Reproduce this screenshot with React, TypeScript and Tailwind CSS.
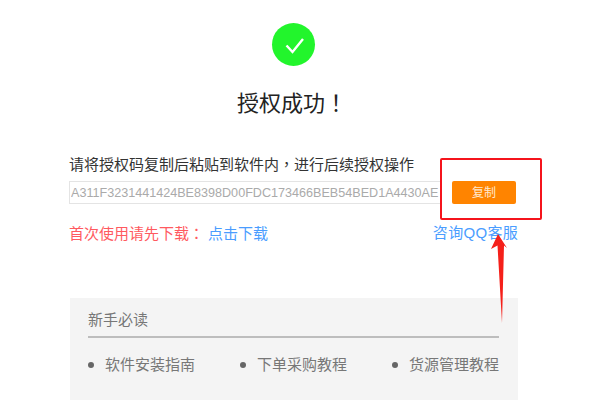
const guides = ["软件安装指南", "下单采购教程", "货源管理教程"];

export default function App() {
  return (
    <div className="relative w-[600px] h-[417px] overflow-hidden bg-white font-['Liberation_Sans','Noto_Sans_CJK_SC',sans-serif]">
      <div className="flex flex-col pl-[69px] pr-[82px] pt-[23px]">
        <div className="flex justify-center">
          <div className="flex items-center justify-center w-[43px] h-[43px] rounded-full bg-[#22f52c]">
            <svg width="24" height="24" viewBox="0 0 24 24" fill="none">
              <path d="M4.5 12.5 L10.5 19 L21 6" stroke="#fff" strokeWidth="2.4" />
            </svg>
          </div>
        </div>
        <h1 className="mt-[20px] mr-[3px] h-[30px] text-center text-[22px] leading-[30px] text-[#222]">
          授权成功<span className="font-['Noto_Sans_CJK_TC']">！</span>
        </h1>

        <p className="mt-[38px] h-[20px] text-[15px] leading-[20px] text-[#333]">
          请将授权码复制后粘贴到软件内<span className="font-['Noto_Sans_CJK_TC']">，</span>进行后续授权操作
        </p>
        <div className="mt-[7px] flex items-center">
          <input
            readOnly
            value="A311F3231441424BE8398D00FDC173466BEB54BED1A4430AE"
            className="w-[372px] h-[23px] border border-[#e4e4e4] px-[1px] text-[12.6px] text-[#aaa] outline-none"
          />
          <button className="ml-[11px] w-[64px] h-[23px] rounded-[2px] bg-[#ff8400] text-[12px] text-[#ffe9cf]">复制</button>
        </div>

        <div className="mt-[19px] h-[20px] flex justify-between text-[15px] leading-[20px]">
          <div>
            <span className="text-[#ff5a5f]">
              首次使用请先下载<span className="font-['Noto_Sans_CJK_TC']">：</span>
            </span>
            <a className="ml-[4px] text-[#4a9dff]">点击下载</a>
          </div>
          <a className="text-[#4a9dff] tracking-[0.3px]">咨询QQ客服</a>
        </div>

        <div className="mt-[55px] ml-[1px] h-[102px] bg-[#f4f4f4] pl-[18px] pr-[19px] pt-[12px]">
          <div className="h-[28px] border-b-2 border-[#bdbdbd] text-[15px] leading-[20px] text-[#777]">新手必读</div>
          <ul className="mt-[17px] flex justify-between">
            {guides.map((g) => (
              <li key={g} className="flex items-center text-[15px] leading-[20px] text-[#777]">
                <span className="mr-[11px] w-[6px] h-[6px] rounded-full bg-[#666]" />
                {g}
              </li>
            ))}
          </ul>
        </div>
      </div>

      {/* annotation drawn over the screenshot */}
      <div className="absolute left-[440px] top-[158px] w-[102px] h-[62px] border-2 border-[#f5141c] rounded-[2px]" />
      <svg className="absolute left-[485px] top-[230px]" width="32" height="96" viewBox="0 0 32 96" fill="none">
        <path d="M13 4 L22 18 L19 15.5 L17 93 L12.5 15.5 L6 19 Z" fill="#f5201a" />
      </svg>
    </div>
  );
}
